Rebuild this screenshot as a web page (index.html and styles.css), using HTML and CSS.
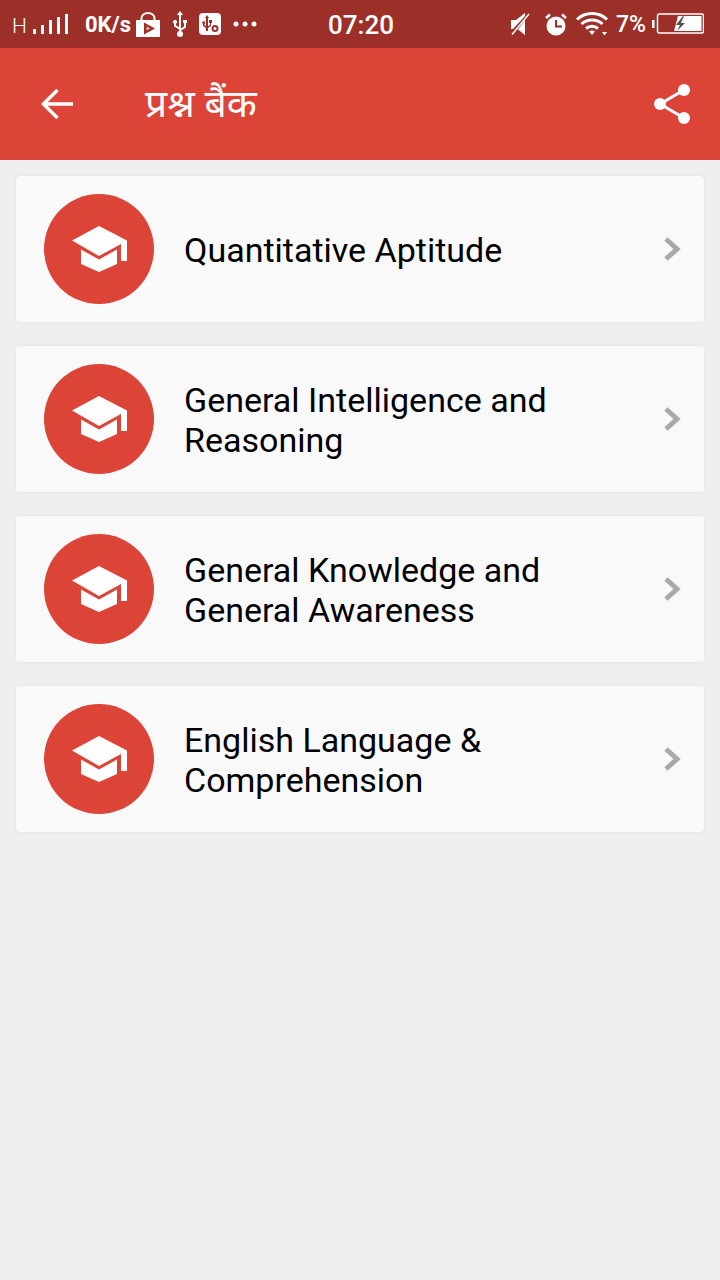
FILE: index.html
```html
<!DOCTYPE html>
<html lang="hi">
<head>
<meta charset="utf-8">
<title>प्रश्न बैंक</title>
<link rel="stylesheet" href="styles.css">
</head>
<body>
<header class="status">
  <div class="status-left">
    <span class="net">H</span>
    <svg class="signal" width="36" height="21" viewBox="0 0 36 21"><path d="M0 15h3v5H0zM8 11h3v9H8zM16 6h3v14h-3zM24 3h3v17h-3zM32 0h3v20h-3z" fill="#fff"/></svg>
    <span class="speed">0K/s</span>
    <svg class="bag" width="24" height="25" viewBox="0 0 24 25"><path d="M0 8h24v17H0z" fill="#fff"/><path d="M5.500 10V6a6.500 5 0 0 1 13 0v4" fill="none" stroke="#fff" stroke-width="2"/><path d="M8 10.500l11 6-11 6z" fill="#9c2f28"/><path d="M10.500 14.500l4 2-4 2z" fill="#e8b9b4"/></svg>
    <svg class="usb" width="16" height="26" viewBox="0 0 16 26"><path d="M8 0l3 4H9v13.500l3-2V12h-1V9h4v3h-1v4.500l-5 3.300V21H7v-2.500l-5-3.300v-2.500a2 2 0 1 1 2 0v1.500l3 2V4H5z" fill="#fff"/><circle cx="8" cy="23" r="3" fill="#fff"/></svg>
    <svg class="usbset" width="22" height="22" viewBox="0 0 22 22"><rect width="22" height="22" rx="4" fill="#fff"/><path d="M8 2l2 3H9v8l2-1v-2h-1V7h3v3h-1v3l-3 2v3H7v-3l-3-2v-2a1.500 1.500 0 1 1 1.500 0v1l1.500 1V5H6z" fill="#9c2f28"/><circle cx="16" cy="15.500" r="2.500" fill="none" stroke="#9c2f28" stroke-width="2"/></svg>
    <svg class="dots" width="24" height="6" viewBox="0 0 24 6"><circle cx="3" cy="3" r="2.500" fill="#fff"/><circle cx="12" cy="3" r="2.500" fill="#fff"/><circle cx="21" cy="3" r="2.500" fill="#fff"/></svg>
  </div>
  <div class="clock">07:20</div>
  <div class="status-right">
    <svg class="mute" width="20" height="22" viewBox="0 0 20 22"><path d="M0 7h5l9-7v3L2 16H0z" fill="#fff"/><path d="M14 7v15l-7-5.500z" fill="#fff"/><path d="M1 21.500L18 1" stroke="#fff" stroke-width="1.500" fill="none"/></svg>
    <svg class="alarm" width="22" height="23" viewBox="0 0 22 23"><circle cx="11" cy="13" r="9.500" fill="#fff"/><path d="M11 7v6.500h6" fill="none" stroke="#9c2f28" stroke-width="2"/><path d="M1 5l4-3.500M21 5l-4-3.500" stroke="#fff" stroke-width="2.500" fill="none"/></svg>
    <svg class="wifi" width="32" height="24" viewBox="0 0 32 24"><path d="M1 7.500C9-.5 23-.5 31 7.500M5.500 12c5.500-5.500 15.500-5.500 21 0M10 16.500c3.500-3 8.500-3 12 0" fill="none" stroke="#fff" stroke-width="3"/><path d="M13 19.500c2-1.200 4-1.200 6 0l-3 3.500z" fill="#fff"/><path d="M26 20h5l-2.500 3.500z" fill="#fff"/></svg>
    <span class="pct">7%</span>
    <svg class="battery" width="52" height="22" viewBox="0 0 52 22"><path d="M0 7h2.500v8H0z" fill="#fff"/><rect x="5.500" y="1" width="46" height="19" rx="2" fill="none" stroke="#fff" stroke-width="1.500"/><path d="M26 3h23.500v15H22z" fill="#fff"/><path d="M31 3l-7 9h4l-3 6 8-8h-4l3-7z" fill="#555"/></svg>
  </div>
</header>

<nav class="appbar">
  <svg class="back" width="33" height="32" viewBox="0 0 33 32"><path d="M33 16H4M17.500 2L3.500 16l14 14" fill="none" stroke="#fff" stroke-width="3.500"/></svg>
  <h1 class="title">प्रश्न बैंक</h1>
  <svg class="share" width="36" height="40" viewBox="0 0 36 40"><circle cx="30" cy="6" r="6" fill="#fff"/><circle cx="6" cy="20" r="6" fill="#fff"/><circle cx="30" cy="34" r="6" fill="#fff"/><path d="M30 6L6 20l24 14" fill="none" stroke="#fff" stroke-width="3"/></svg>
</nav>

<main class="list">
  <a class="card">
    <span class="badge"><svg width="55" height="46" viewBox="0 0 55 46"><path d="M27 0L0 14.500 27 30l22-12v17h6V14.500z" fill="#fff"/><path d="M9 23.500V38l18 8 18-8V23.500L27 33.500z" fill="#fff"/></svg></span>
    <span class="label">Quantitative Aptitude</span>
    <svg class="chev" width="18" height="26" viewBox="0 0 18 26"><path d="M3 3l11 10L3 23" fill="none" stroke="#a9a9a9" stroke-width="5"/></svg>
  </a>
  <a class="card">
    <span class="badge"><svg width="55" height="46" viewBox="0 0 55 46"><path d="M27 0L0 14.500 27 30l22-12v17h6V14.500z" fill="#fff"/><path d="M9 23.500V38l18 8 18-8V23.500L27 33.500z" fill="#fff"/></svg></span>
    <span class="label">General Intelligence and Reasoning</span>
    <svg class="chev" width="18" height="26" viewBox="0 0 18 26"><path d="M3 3l11 10L3 23" fill="none" stroke="#a9a9a9" stroke-width="5"/></svg>
  </a>
  <a class="card">
    <span class="badge"><svg width="55" height="46" viewBox="0 0 55 46"><path d="M27 0L0 14.500 27 30l22-12v17h6V14.500z" fill="#fff"/><path d="M9 23.500V38l18 8 18-8V23.500L27 33.500z" fill="#fff"/></svg></span>
    <span class="label">General Knowledge and General Awareness</span>
    <svg class="chev" width="18" height="26" viewBox="0 0 18 26"><path d="M3 3l11 10L3 23" fill="none" stroke="#a9a9a9" stroke-width="5"/></svg>
  </a>
  <a class="card">
    <span class="badge"><svg width="55" height="46" viewBox="0 0 55 46"><path d="M27 0L0 14.500 27 30l22-12v17h6V14.500z" fill="#fff"/><path d="M9 23.500V38l18 8 18-8V23.500L27 33.500z" fill="#fff"/></svg></span>
    <span class="label">English Language &amp; Comprehension</span>
    <svg class="chev" width="18" height="26" viewBox="0 0 18 26"><path d="M3 3l11 10L3 23" fill="none" stroke="#a9a9a9" stroke-width="5"/></svg>
  </a>
</main>
</body>
</html>
```
FILE: styles.css
```css
* { box-sizing: border-box; }
html, body { margin: 0; height: 100%; }
body {
  width: 720px;
  min-height: 1280px;
  background: #eeeeee;
  font-family: Roboto, "Noto Sans", sans-serif;
  color: #000;
  overflow: hidden;
}
svg { display: block; flex: none; }

.status {
  height: 48px;
  background: #9c2f28;
  color: #fff;
  display: flex;
  align-items: center;
  justify-content: space-between;
  padding: 0 16px 0 12px;
  position: relative;
}
.status-left, .status-right { display: flex; align-items: center; }
.net { font-size: 21px; font-weight: 300; width: 21px; margin-top: 3px; }
.signal { margin-top: 1px; }
.speed { font-size: 22px; font-weight: 700; margin-left: 16px; }
.bag { margin-left: 5px; }
.usb { margin-left: 12px; }
.usbset { margin-left: 11px; }
.dots { margin-left: 12px; }
.clock {
  position: absolute;
  left: 328px;
  top: 9px;
  font-size: 26px;
  font-weight: 500;
  line-height: 32px;
}
.mute { margin-right: 14px; }
.alarm { margin-right: 9px; }
.wifi { margin-right: 8px; }
.pct { font-size: 23px; font-weight: 500; margin-right: 6px; }

.appbar {
  height: 112px;
  background: #dc4438;
  display: flex;
  align-items: center;
  padding: 0 30px 0 40px;
}
.title {
  margin: 0 auto 0 72px;
  font-size: 39px;
  font-weight: 400;
  color: #fff;
  line-height: 48px;
}

.list {
  display: flex;
  flex-direction: column;
  gap: 22px;
  padding: 15px 15px 0;
}
.card {
  height: 148px;
  background: #f9f9f9;
  border: 1px solid #e8e8e8;
  border-radius: 4px;
  display: flex;
  align-items: center;
  padding: 0 23px 0 28px;
}
.badge {
  width: 110px;
  height: 110px;
  border-radius: 50%;
  background: #dc4438;
  display: flex;
  align-items: center;
  justify-content: center;
  flex: none;
}
.label {
  flex: 1;
  margin-left: 30px;
  padding: 2px 90px 0 0;
  font-size: 34px;
  line-height: 40px;
}
```
